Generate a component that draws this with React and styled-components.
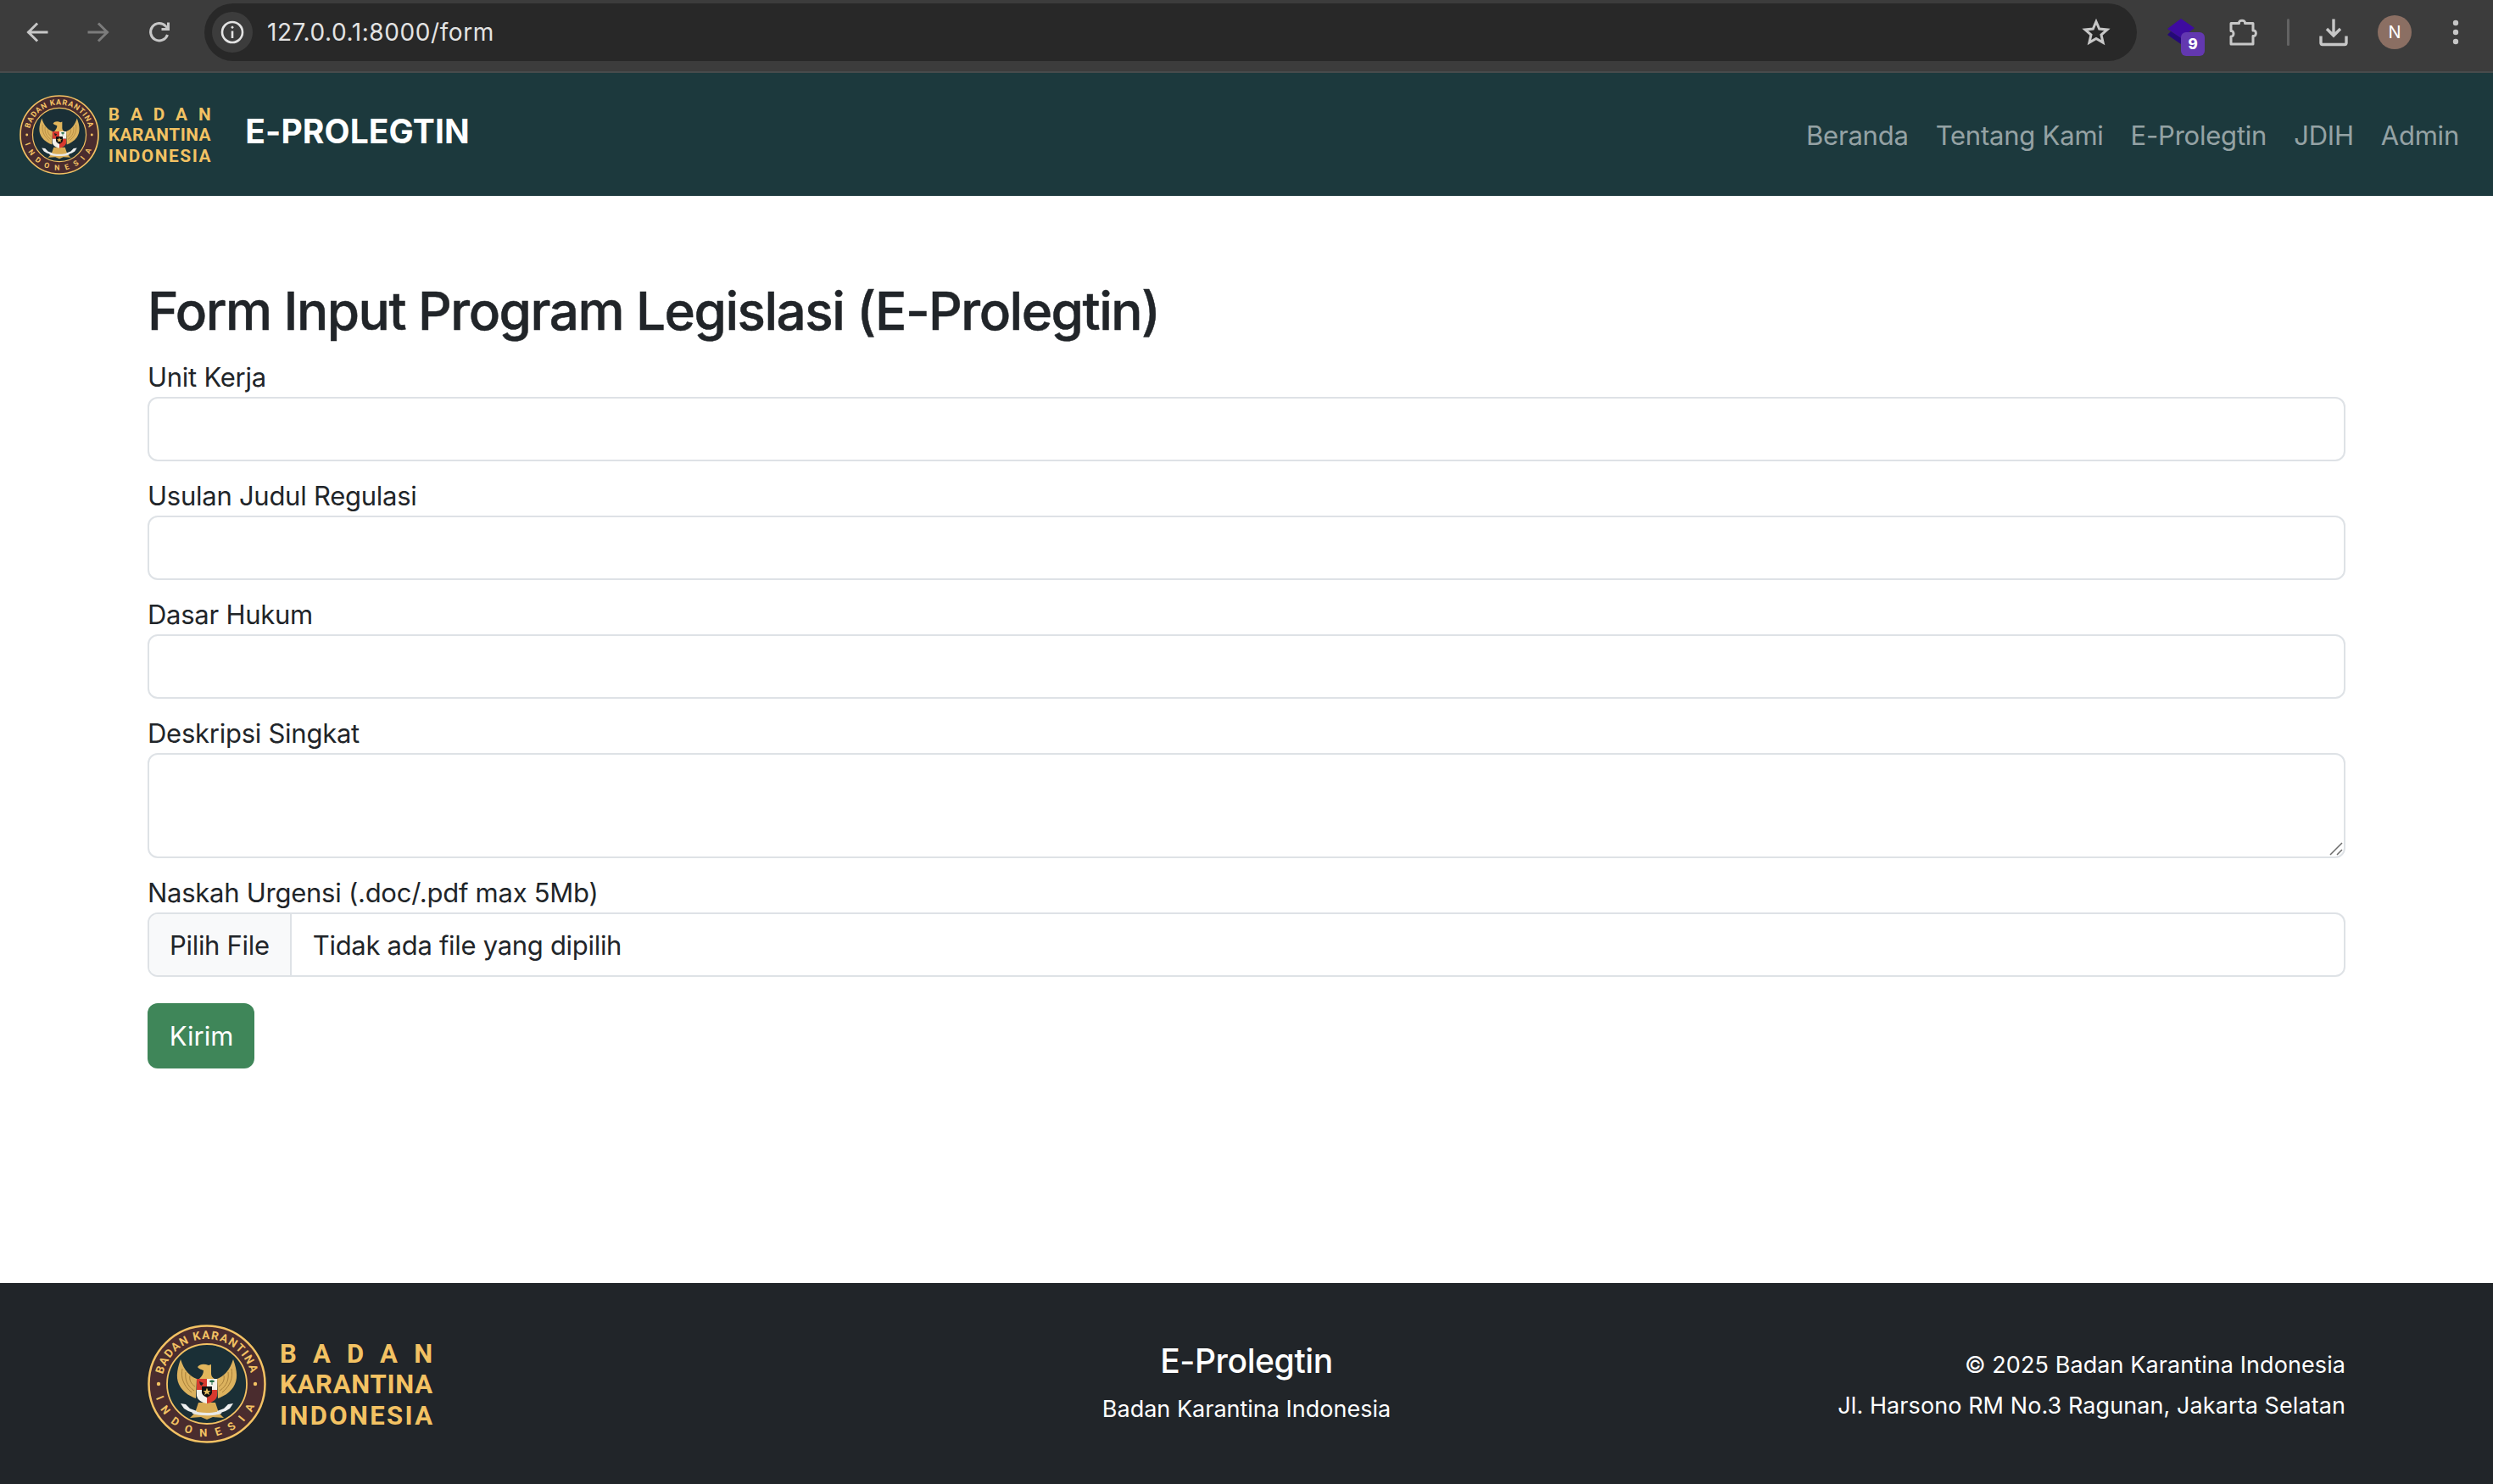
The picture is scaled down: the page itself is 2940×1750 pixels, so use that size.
import React from "react";
import styled, { createGlobalStyle } from "styled-components";

const FONT = `Inter, "Noto Sans", "Liberation Sans", sans-serif`;

const Global = createGlobalStyle`
  html, body { margin: 0; padding: 0; background: #fff; }
  body { font-family: ${FONT}; color: #212529; font-size: 32px; line-height: 1.5; }
  * { box-sizing: border-box; }
`;

const Page = styled.div`
  min-height: 1750px;
  display: flex;
  flex-direction: column;
`;

/* browser toolbar */
const Toolbar = styled.div`
  height: 86px;
  flex: none;
  background: #3c3c3c;
  border-bottom: 2px solid #474b4c;
  display: flex;
  align-items: flex-start;
  padding: 0 4px 0 8px;
`;
const Slot = styled.div`
  width: ${(p) => p.$w}px;
  height: 76px;
  flex: none;
  display: flex;
  align-items: center;
  justify-content: center;
`;
const AddressBar = styled.div`
  flex: 1;
  height: 68px;
  margin: 4px 16px 0 17px;
  background: #282828;
  border-radius: 34px;
  display: flex;
  align-items: center;
  padding: 0 31px 0 9px;
`;
const InfoChip = styled.div`
  width: 48px;
  height: 48px;
  border-radius: 50%;
  background: #3c3c3c;
  display: flex;
  align-items: center;
  justify-content: center;
  flex: none;
`;
const Url = styled.span`
  margin-left: 17px;
  font-size: 28px;
  line-height: 1;
  letter-spacing: 0.58px;
  color: #e3e3e3;
  flex: 1;
`;
const Avatar = styled.div`
  width: 40px;
  height: 40px;
  border-radius: 50%;
  background: #8b6f63;
  color: #fff;
  font-size: 20px;
  line-height: 40px;
  text-align: center;
`;

/* site navbar */
const NavBar = styled.nav`
  height: 145px;
  flex: none;
  background: #1c393d;
  display: flex;
  align-items: center;
  padding: 0 24px 0 23px;
`;
const BrandTitle = styled.a`
  margin: 0 0 7px 38px;
  font-size: 39px;
  font-weight: 700;
  line-height: 60px;
  letter-spacing: 0.1px;
  color: #fff;
`;
const NavLinks = styled.div`
  margin-left: auto;
  display: flex;
  padding-top: 3px;
`;
const NavLink = styled.a`
  padding: 0 16px;
  font-size: 31px;
  line-height: 48px;
  letter-spacing: -0.22px;
  color: rgba(255, 255, 255, 0.55);
`;

/* form */
const Main = styled.main`
  flex: 1;
  padding: 96px 174px 0;
`;
const Heading = styled.h2`
  margin: 2px 0 14px;
  font-size: 62px;
  font-weight: 500;
  line-height: 76.8px;
  letter-spacing: -1.5px;
  -webkit-text-stroke: 0.5px #212529;
  color: #212529;
`;
const Field = styled.div`
  margin-bottom: ${(p) => p.$mb ?? 16}px;
`;
const Label = styled.label`
  display: block;
  padding-top: 2px;
  font-size: 31px;
  line-height: 46px;
  letter-spacing: -0.26px;
`;
const TextInput = styled.input`
  display: block;
  width: 100%;
  height: 76px;
  border: 2px solid #dee2e6;
  border-radius: 12px;
  background: #fff;
  padding: 12px 24px;
  font: inherit;
  outline: none;
`;
const AreaWrap = styled.div`
  position: relative;
`;
const TextArea = styled.textarea`
  display: block;
  width: 100%;
  height: 124px;
  border: 2px solid #dee2e6;
  border-radius: 12px;
  background: #fff;
  padding: 12px 24px;
  font: inherit;
  outline: none;
  resize: none;
`;
const Grip = styled.svg`
  position: absolute;
  right: 2px;
  bottom: 2px;
  width: 20px;
  height: 20px;
`;
const FileBox = styled.div`
  display: flex;
  height: 76px;
  border: 2px solid #dee2e6;
  border-radius: 12px;
  overflow: hidden;
  font-size: 31px;
  line-height: 74px;
  letter-spacing: -0.3px;
`;
const FileButton = styled.span`
  flex: none;
  padding: 0 24px;
  background: #f8f9fa;
  border-right: 2px solid #dee2e6;
`;
const FileName = styled.span`
  padding-left: 25px;
`;
const SubmitButton = styled.button`
  display: block;
  width: 126px;
  height: 77px;
  border: 0;
  border-radius: 12px;
  background: #3f8659;
  color: #fff;
  font-family: inherit;
  font-size: 31px;
  letter-spacing: 0;
  padding: 1px 0 0 1px;
`;

/* footer */
const Footer = styled.footer`
  height: 237px;
  flex: none;
  background: #212529;
  color: #fff;
  padding: 0 174px;
  display: grid;
  grid-template-columns: 1fr auto 1fr;
  align-items: center;
`;
const FooterCenter = styled.div`
  text-align: center;
`;
const FooterTitle = styled.div`
  font-size: 39px;
  font-weight: 500;
  line-height: 48px;
  letter-spacing: -0.4px;
  margin-bottom: 12px;
`;
const FooterText = styled.div`
  font-size: 27px;
  line-height: 42px;
  letter-spacing: 0;
`;
const FooterRight = styled.div`
  text-align: right;
  font-size: 27px;
  line-height: 48px;
  letter-spacing: 0.08px;
  padding-top: 5px;
`;

const GOLD = "#f3c263";

function Logo({ height, id }) {
  const LOGO_FONT = `Roboto, "Liberation Sans", sans-serif`;
  return (
    <svg width={(height * 340) / 140} height={height} viewBox="0 0 340 140" style={{ flex: "none", display: "block" }}>
      <defs>
        <path id={`${id}-top`} d="M 70 70 m -53 0 a 53 53 0 0 1 106 0" />
        <path id={`${id}-bot`} d="M 70 70 m -62 0 a 62 62 0 0 0 124 0" />
      </defs>
      <circle cx="70" cy="70" r="68.5" fill="#4a2c2e" stroke={GOLD} strokeWidth="2.5" />
      <circle cx="70" cy="70" r="47" fill="#1a2f36" stroke={GOLD} strokeWidth="1.8" />
      <text fill={GOLD} fontFamily={LOGO_FONT} fontWeight="700" fontSize="13.5" letterSpacing="1.3">
        <textPath href={`#${id}-top`} startOffset="50%" textAnchor="middle">BADAN KARANTINA</textPath>
      </text>
      <text fill={GOLD} fontFamily={LOGO_FONT} fontWeight="700" fontSize="13" letterSpacing="10.5">
        <textPath href={`#${id}-bot`} startOffset="50%" textAnchor="middle">INDONESIA</textPath>
      </text>
      <circle cx="13" cy="70" r="2.2" fill={GOLD} />
      <circle cx="127" cy="70" r="2.2" fill={GOLD} />

      {/* Garuda */}
      <g transform="translate(70 70)">
        <path d="M-31-29 C-36-15-37-5-31 4 C-26 11-19 15-13 17 L-12-6 C-20-9-27-16-31-29Z" fill="#dcb25e" />
        <path d="M31-29 C36-15 37-5 31 4 C26 11 19 15 13 17 L12-6 C20-9 27-16 31-29Z" fill="#dcb25e" />
        <path d="M-29-18 C-31-8-28 2-18 10 M-25-14 C-26-6-24 2-15 8 M-20-10 C-21-5-19 0-14 3 M29-18 C31-8 28 2 18 10 M25-14 C26-6 24 2 15 8 M20-10 C21-5 19 0 14 3" stroke="#a37a35" strokeWidth="0.9" fill="none" />
        <path d="M-11-20 C-8-24-3-24 2-22 L5-23 L5-12 C5-9 7-7 9-6 L-9-6 C-6-9-4-12-4-16 C-6-17-9-17-11-20Z" fill="#e2b65c" />
        <path d="M-10 22 L10 22 L14 34 L20 40 L7 39 L0 42 L-7 39 L-20 40 L-14 34Z" fill="#d9ac54" />
        <path d="M-12-6 L0-6 L0 7 L-12 7Z" fill="#d8392e" />
        <path d="M0-6 L12-6 L12 7 L0 7Z" fill="#f4f1ea" />
        <path d="M-12 7 L0 7 L0 23 C-6 22-11 19-12 14Z" fill="#f4f1ea" />
        <path d="M0 7 L12 7 L12 14 C11 19 6 22 0 23Z" fill="#d8392e" />
        <path d="M-6 3 L6 3 L6 10 C6 13 2 15 0 16 C-2 15-6 13-6 10Z" fill="#111" />
        <path d="M0 4.5 L1.3 8 L4.5 8 L2 10 L3 13 L0 11.2 L-3 13 L-2 10 L-4.5 8 L-1.3 8Z" fill="#e7bd5f" />
        <path d="M3-3 C3-5 9-5 9-3 C9-2 7-2 6.5-2 L6.5 1 L5.5 1 L5.5-2 C5-2 3-2 3-3Z" fill="#1f6b45" />
        <path d="M-9-3 L-4-1 L-6 2 L-8 1Z" fill="#222" />
        <path d="M-31 23 L-25 24 L-20 29 L-12 32 L-13 35 L-22 32 L-27 29Z" fill="#eef0f0" />
        <path d="M31 23 L25 24 L20 29 L12 32 L13 35 L22 32 L27 29Z" fill="#eef0f0" />
        <path d="M-18 31 C-8 35 8 35 18 31 L17 35 C8 38-8 38-17 35Z" fill="#e9e9e6" />
      </g>

      <text x="156" y="44.5" fill={GOLD} fontFamily={LOGO_FONT} fontWeight="700" fontSize="31" textLength="180" lengthAdjust="spacing">BADAN</text>
      <text x="156" y="81" fill={GOLD} fontFamily={LOGO_FONT} fontWeight="700" fontSize="31" textLength="180" lengthAdjust="spacing">KARANTINA</text>
      <text x="156" y="118" fill={GOLD} fontFamily={LOGO_FONT} fontWeight="700" fontSize="31" textLength="180" lengthAdjust="spacing">INDONESIA</text>
    </svg>
  );
}

const ICON = "#c7c7c7";

const Back = ({ color = ICON, flip }) => (
  <svg width="32" height="32" viewBox="0 0 32 32" fill="none" stroke={color} strokeWidth="3" strokeLinecap="square" style={flip ? { transform: "scaleX(-1)" } : undefined}>
    <path d="M27 16H6M15 6.5L5.5 16l9.5 9.5" />
  </svg>
);
const Reload = () => (
  <svg width="32" height="32" viewBox="0 0 32 32" fill="none" stroke={ICON} strokeWidth="3">
    <path d="M25.5 19a10.200 10.200 0 1 1-2.200-10.200L26 11.500" />
    <path d="M26.500 4.500V12.500H18.500" />
  </svg>
);
const Info = () => (
  <svg width="30" height="30" viewBox="0 0 30 30" fill="none" stroke="#e3e3e3" strokeWidth="2.6">
    <circle cx="15" cy="15" r="12" />
    <path d="M15 13.500V22" />
    <circle cx="15" cy="9.200" r="1.100" fill="#e3e3e3" strokeWidth="1" />
  </svg>
);
const Star = () => (
  <svg width="34" height="34" viewBox="0 0 34 34" fill="none" stroke={ICON} strokeWidth="3" strokeLinejoin="miter">
    <path d="M17 4.500l3.700 8.600 9.300.8-7 6.100 2.100 9.100L17 24.400l-8.100 4.700 2.100-9.100-7-6.100 9.300-.8z" />
  </svg>
);
const Extension = () => (
  <svg width="72" height="76" viewBox="0 0 72 76">
    <path d="M36 22L52 33 36 45 20 34Z" fill="#3e0ba0" />
    <path d="M20 41L36 52 36 45 24 37Z" fill="#25087a" />
    <rect x="36" y="38" width="28" height="28" rx="6" fill="#6338b0" />
    <text x="50" y="58" fill="#fff" fontFamily="Inter, sans-serif" fontWeight="800" fontSize="17" textAnchor="middle">9</text>
  </svg>
);
const Puzzle = () => (
  <svg width="36" height="36" viewBox="0 0 36 36" fill="none" stroke={ICON} strokeWidth="3" strokeLinejoin="round">
    <path d="M3 7.500h9.500c-.6-4.500 7.600-4.500 7 0H29v8.500c4.500-.6 4.500 7.100 0 6.500V32H3v-9c4 .5 4-7 0-6.500Z" />
  </svg>
);
const Divider = styled.div`
  width: 3px;
  height: 32px;
  border-radius: 2px;
  background: #636363;
`;
const Download = () => (
  <svg width="34" height="34" viewBox="0 0 34 34" fill="none" stroke={ICON} strokeWidth="3.4">
    <path d="M17 1.500V20M9 13l8 8 8-8" />
    <path d="M2 21.500V29.500a2 2 0 0 0 2 2h26a2 2 0 0 0 2-2V21.500" />
  </svg>
);
const Dots = () => (
  <svg width="8" height="30" viewBox="0 0 8 30" fill={ICON}>
    <circle cx="4" cy="4" r="3.200" />
    <circle cx="4" cy="15" r="3.200" />
    <circle cx="4" cy="26" r="3.200" />
  </svg>
);

export default function App() {
  return (
    <Page>
      <Global />
      <Toolbar>
        <Slot $w={72}><Back /></Slot>
        <Slot $w={72}><Back color="#7c7c7c" flip /></Slot>
        <Slot $w={72}><Reload /></Slot>
        <AddressBar>
          <InfoChip><Info /></InfoChip>
          <Url>127.0.0.1:8000/form</Url>
          <Star />
        </AddressBar>
        <Slot $w={72}><Extension /></Slot>
        <Slot $w={76}><Puzzle /></Slot>
        <Slot $w={28}><Divider /></Slot>
        <Slot $w={80}><Download /></Slot>
        <Slot $w={64}><Avatar>N</Avatar></Slot>
        <Slot $w={80}><Dots /></Slot>
      </Toolbar>

      <NavBar>
        <Logo height={94} id="nav" />
        <BrandTitle>E-PROLEGTIN</BrandTitle>
        <NavLinks>
          <NavLink>Beranda</NavLink>
          <NavLink>Tentang Kami</NavLink>
          <NavLink>E-Prolegtin</NavLink>
          <NavLink>JDIH</NavLink>
          <NavLink>Admin</NavLink>
        </NavLinks>
      </NavBar>

      <Main>
        <Heading>Form Input Program Legislasi (E-Prolegtin)</Heading>
        <Field>
          <Label>Unit Kerja</Label>
          <TextInput type="text" />
        </Field>
        <Field>
          <Label>Usulan Judul Regulasi</Label>
          <TextInput type="text" />
        </Field>
        <Field>
          <Label>Dasar Hukum</Label>
          <TextInput type="text" />
        </Field>
        <Field>
          <Label>Deskripsi Singkat</Label>
          <AreaWrap>
            <TextArea />
            <Grip viewBox="0 0 20 20" fill="none" stroke="#6b6b6b" strokeWidth="1.500">
              <path d="M4 18L18 4M12 18L18 12" />
            </Grip>
          </AreaWrap>
        </Field>
        <Field $mb={31}>
          <Label>Naskah Urgensi (.doc/.pdf max 5Mb)</Label>
          <FileBox>
            <FileButton>Pilih File</FileButton>
            <FileName>Tidak ada file yang dipilih</FileName>
          </FileBox>
        </Field>
        <SubmitButton>Kirim</SubmitButton>
      </Main>

      <Footer>
        <Logo height={140} id="foot" />
        <FooterCenter>
          <FooterTitle>E-Prolegtin</FooterTitle>
          <FooterText>Badan Karantina Indonesia</FooterText>
        </FooterCenter>
        <FooterRight>
          <div>© 2025 Badan Karantina Indonesia</div>
          <div>Jl. Harsono RM No.3 Ragunan, Jakarta Selatan</div>
        </FooterRight>
      </Footer>
    </Page>
  );
}
